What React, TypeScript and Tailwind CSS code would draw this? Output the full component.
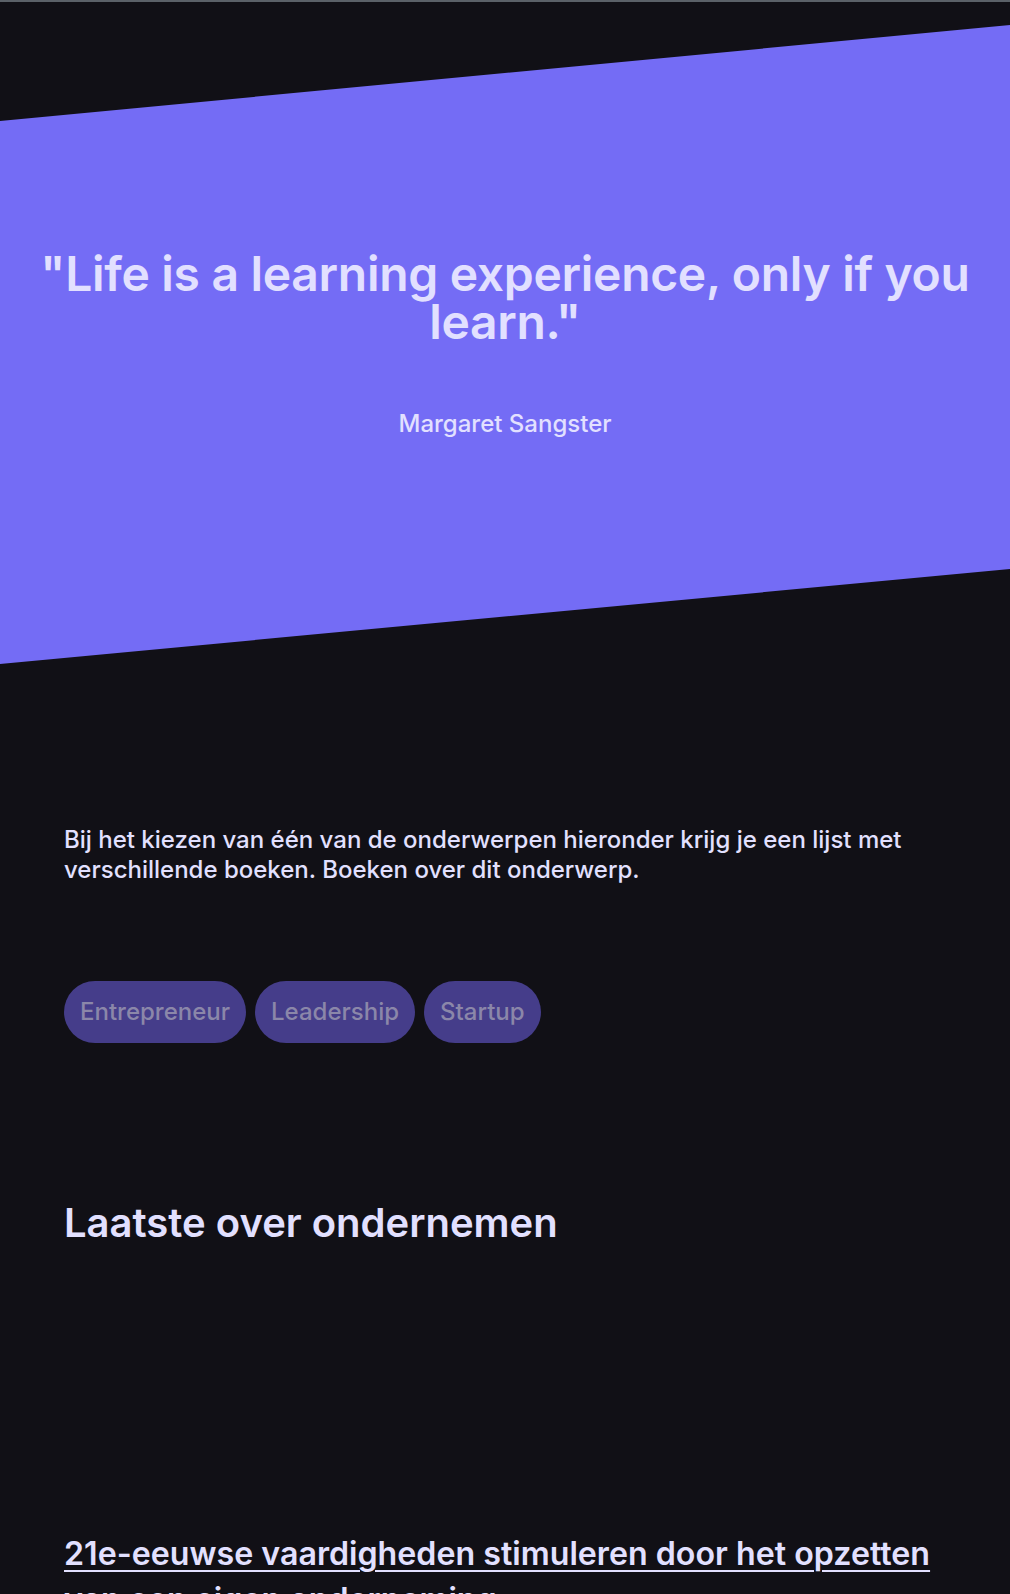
export default function App() {
  const topics = ['Entrepreneur', 'Leadership', 'Startup'];

  return (
    <div className="min-h-screen bg-[#111016] border-t-2 border-[#5b6168] text-[#e2e0ff] font-['Inter',sans-serif] overflow-hidden h-[1594px]">
      {/* quote */}
      <section className="h-[662px] bg-[#746cf5] [clip-path:polygon(0_119px,100%_23px,100%_567px,0_100%)] flex flex-col items-center pt-[248px] px-8">
        <h1 className="text-5xl leading-[48px] font-semibold text-center tracking-[-0.3px]">
          "Life is a learning experience, only if you learn."
        </h1>
        <p className="mt-[62px] text-2xl leading-[32px] font-medium">Margaret Sangster</p>
      </section>

      <main className="px-16">
        <p className="mt-[161px] text-2xl leading-[30px] font-medium max-w-[880px]">
          Bij het kiezen van één van de onderwerpen hieronder krijg je een lijst met verschillende boeken. Boeken over dit onderwerp.
        </p>

        <div className="mt-[96px] flex gap-[9px]">
          {topics.map(t => (
            <button key={t} className="bg-[#453d8a] text-[#8b87a9] text-2xl font-medium rounded-full px-4 py-[13px] leading-[36px]">
              {t}
            </button>
          ))}
        </div>

        <h2 className="mt-[156px] text-[40px] leading-[48px] font-semibold">Laatste over ondernemen</h2>

        <a href="#" className="block mt-[284px] text-[32.2px] leading-[46px] font-semibold underline underline-offset-[5px] decoration-[2px]">
          21e-eeuwse vaardigheden stimuleren door het opzetten van een eigen onderneming
        </a>
      </main>
    </div>
  );
}
